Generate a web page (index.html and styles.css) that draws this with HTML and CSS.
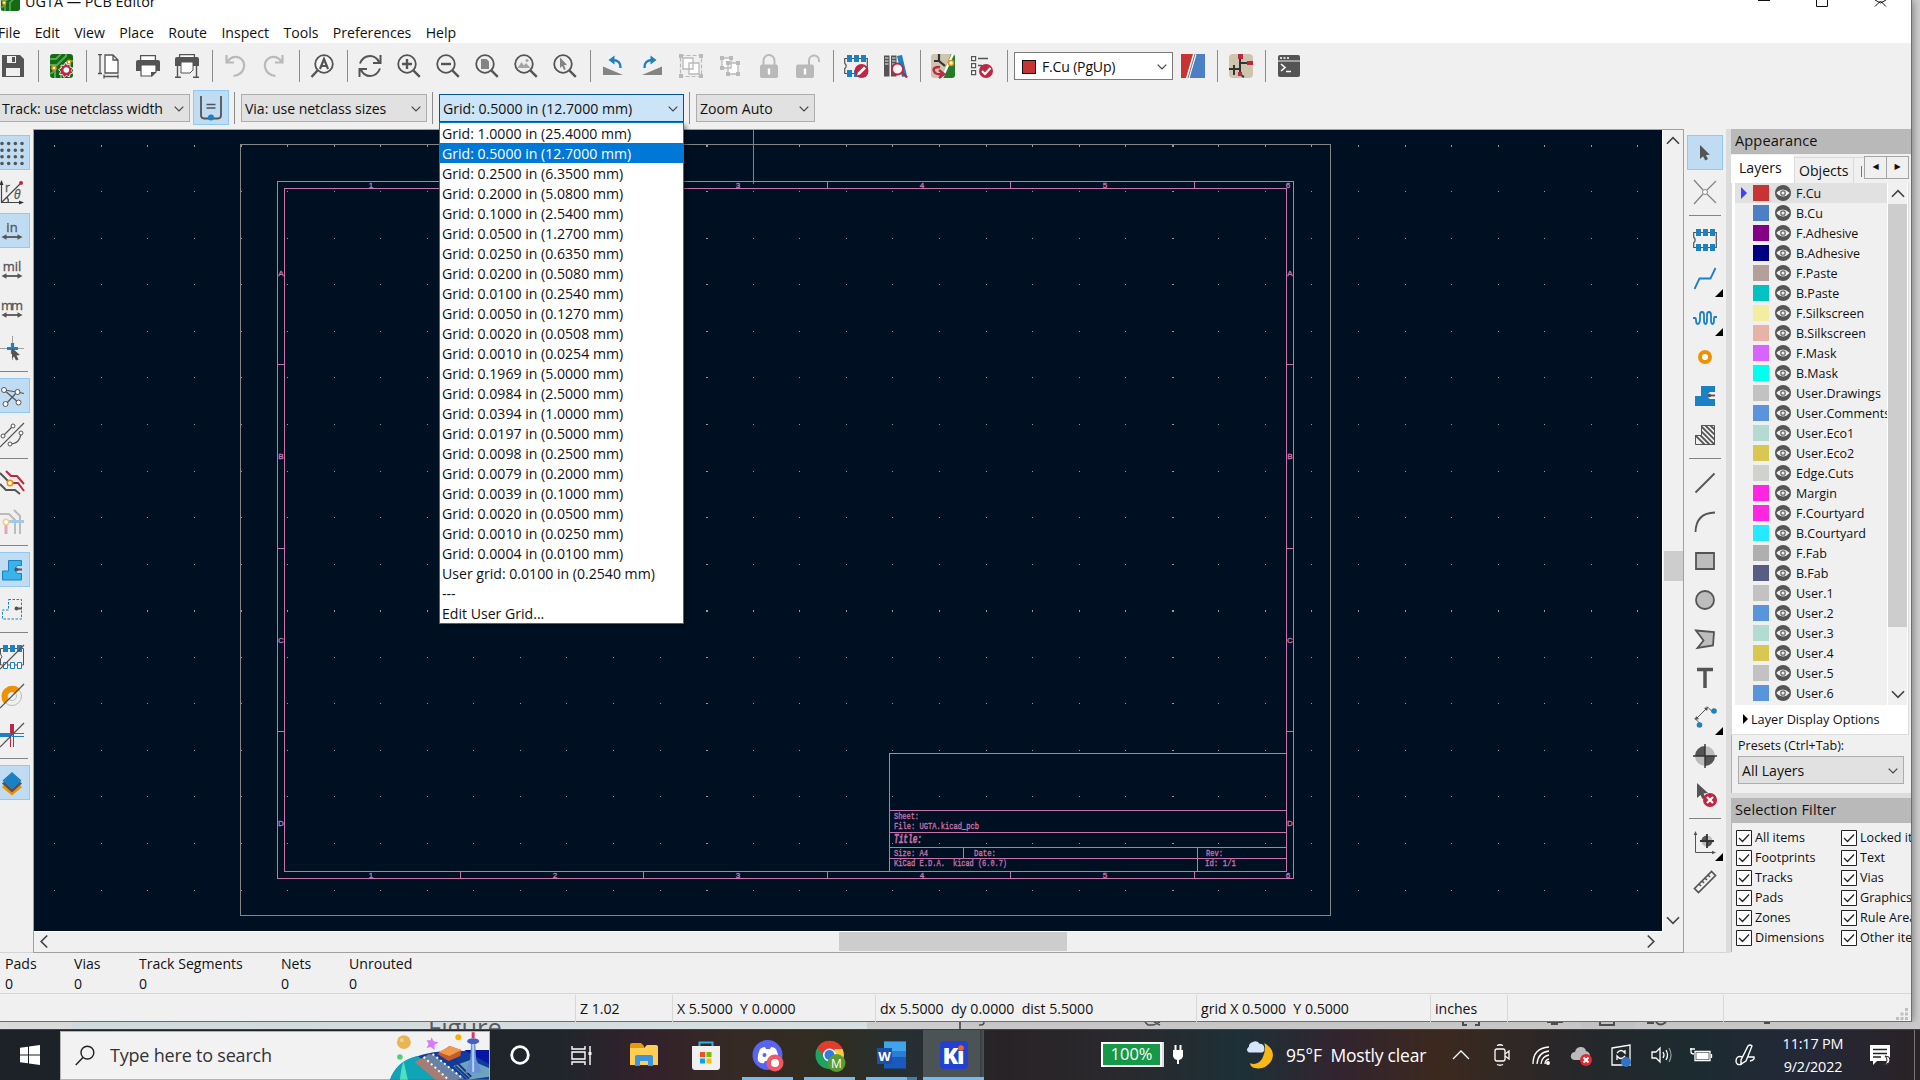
FILE: index.html
```html
<!DOCTYPE html>
<html lang="en">
<head>
<meta charset="utf-8">
<title>UGTA — PCB Editor</title>
<link rel="stylesheet" href="styles.css">
</head>
<body>
<svg class="defs" aria-hidden="true">
  <symbol id="chev" viewBox="0 0 10 6"><path d="M.7.7 5 5 9.3.7" fill="none" stroke="currentColor" stroke-width="1.2"/></symbol>
  <symbol id="lens" viewBox="0 0 24 24"><circle cx="10" cy="10" r="8.8" fill="none" stroke="#545454" stroke-width="1.8"/><path d="m16.3 16.3 6.5 6.5" stroke="#545454" stroke-width="2.4"/></symbol>
  <symbol id="eye" viewBox="0 0 16 16"><circle cx="8" cy="8" r="8" fill="#545454"/><path d="M1.3 8Q8 .8 14.7 8 8 15.2 1.3 8z" fill="#f2f2f2"/><circle cx="8" cy="8" r="2.2" fill="#f2f2f2" stroke="#686868" stroke-width="1.3"/></symbol>
  <symbol id="board" viewBox="0 0 24 24"><rect x="1" width="23" height="24" rx="3" fill="#136b13"/><path d="M1 5h6l5-5M1 11h7l9-9V0M24 7h-5l-7 7v10M1 20l5-3v7" fill="none" stroke="#5ba55b" stroke-width="2"/><circle cx="5" cy="14" r="2" fill="#fff" stroke="#f29100" stroke-width="1.5"/><circle cx="20" cy="8" r="1.8" fill="#fff" stroke="#f29100" stroke-width="1.3"/></symbol>
  <symbol id="fp" viewBox="0 0 24 24"><path d="M.7 4.5h22.6v15H.7v-4.7q3-2.8 0-5.6z" fill="none" stroke="#545454" stroke-width="1.2"/><path d="M3 1h5v7H3zm7 0h5v7h-5zm7 0h5v7h-5zM3 16h5v7H3zm7 0h5v7h-5zm7 0h5v7h-5z" fill="#1a81c4"/></symbol>
  <symbol id="units" viewBox="0 0 24 24"><path d="M4 18h16" stroke="#545454" stroke-width="1.8"/><path d="m1.500 18 5-2.800v5.600zM22.500 18l-5-2.800v5.600z" fill="#545454"/></symbol>
</svg>

<div class="window">
  <header class="titlebar">
    <svg class="app-icon" viewBox="0 0 24 24"><use href="#board"/></svg>
    <span class="title">UGTA — PCB Editor</span>
    <svg class="win-buttons" viewBox="0 0 140 12"><path d="M2 .5h12M60.500 0v6.500h11V0M119 0l5.500 3L130 0M119 6.500l5.500-5.500 5.500 5.500" fill="none" stroke="#111"/></svg>
  </header>
  <nav class="menubar"><span>File</span><span>Edit</span><span>View</span><span>Place</span><span>Route</span><span>Inspect</span><span>Tools</span><span>Preferences</span><span>Help</span></nav>

  <div class="toolbar main-tools">
    <button><svg viewBox="0 0 24 24"><path d="M1 1h18l4 4v18H1z" fill="#545454"/><path d="M6 2h9v7H6zM5 14h14v8H5z" fill="#f0f0f0"/><path d="M11 3h3v5h-3z" fill="#545454"/></svg></button>
    <i class="sep"></i>
    <button><svg viewBox="0 0 24 24"><use href="#board"/><path d="m17 8 1 3 3-1 0 3 3 1-1.500 2.500L24 19l-3 1-.5 3-3-1.500L15 23.500l-1.500-3-3 0 1-3-2-2 2.800-1.500-.3-3 3 .5z" fill="#bf2641" stroke="#fff" stroke-width=".8"/><circle cx="17.300" cy="16" r="2.800" fill="#fff"/></svg></button>
    <i class="sep"></i>
    <button><svg viewBox="0 0 24 24"><path d="M8 1h8l5 5v13H8zM16 1v5h5" fill="#fff" stroke="#545454" stroke-width="1.300"/><path d="M3 0v20M1 .6h4M1 19.500h4M7 22.500h14M7 20.500v4M21 20.500v4" fill="none" stroke="#545454" stroke-width="1.300"/></svg></button>
    <button><svg viewBox="0 0 24 24"><path d="M4.600 7V1.600h14.800V7" fill="#fff" stroke="#545454" stroke-width="1.300"/><path d="M0 8q0-2 2-2h20q2 0 2 2v9H0z" fill="#545454"/><path d="M5 11h15v7l-4 4H5z" fill="#fff" stroke="#545454" stroke-width="1.200"/><path d="m20 18-5 0v5" fill="#545454"/></svg></button>
    <button><svg viewBox="0 0 24 24"><path d="M4.600 4V.6h14.800V4" fill="#fff" stroke="#545454" stroke-width="1.300"/><path d="M0 5q0-2 2-2h20q2 0 2 2v7H0z" fill="#545454"/><path d="M6 8h12v8l-3 3H6z" fill="#fff" stroke="#545454"/><path d="M2.500 12v11M21.500 12v11M0 23.300h6M18 23.300h6" stroke="#545454" stroke-width="1.400"/></svg></button>
    <i class="sep"></i>
    <button><svg viewBox="0 0 24 24"><path d="M3.500 1v7.500H11M4 8Q9 1 16 3.500q6 3 5 9.500-1.500 8-10.500 9" fill="none" stroke="#b9b9b9" stroke-width="2.200"/></svg></button>
    <button><svg viewBox="0 0 24 24"><path d="M20.500 1v7.500H13M20 8Q15 1 8 3.500 2 6.500 3 13q1.500 8 10.500 9" fill="none" stroke="#b9b9b9" stroke-width="2.200"/></svg></button>
    <i class="sep"></i>
    <button><svg viewBox="0 0 24 24"><circle cx="14" cy="10" r="8.800" fill="#f6f6f6" stroke="#545454" stroke-width="1.800"/><path d="m7.500 16.500-6 6.500" stroke="#545454" stroke-width="2.400"/><path d="m10 15 4-10 4 10M11.500 12h5" fill="none" stroke="#545454" stroke-width="2.200"/></svg></button>
    <i class="sep"></i>
    <button><svg viewBox="0 0 24 24"><path d="M2 9.500Q5 2 12 2q6 0 9 6M22.500 1v8H15M22 14.500Q19 22 12 22q-6 0-9-6M1.500 23v-8H9" fill="none" stroke="#545454" stroke-width="2"/></svg></button>
    <button><svg viewBox="0 0 24 24"><use href="#lens"/><path d="M10 5v10M5 10h10" stroke="#545454" stroke-width="2.400"/></svg></button>
    <button><svg viewBox="0 0 24 24"><use href="#lens"/><path d="M5 10h10" stroke="#545454" stroke-width="2.400"/></svg></button>
    <button><svg viewBox="0 0 24 24"><use href="#lens"/><path d="M6 5h5.500L14 7.500V15H6z" fill="#848484"/></svg></button>
    <button><svg viewBox="0 0 24 24"><use href="#lens"/><path d="m3.500 14 4-6 2.500 3.500 2-2.500 4.500 5z" fill="#a5a5a5"/><circle cx="13" cy="6.500" r="1.500" fill="#a5a5a5"/></svg></button>
    <button><svg viewBox="0 0 24 24"><use href="#lens"/><path d="m7 3.500 7 7.300-3 .4 1.800 4-1.800.8-1.800-4L7 14z" fill="#848484"/></svg></button>
    <i class="sep"></i>
    <button><svg viewBox="0 0 24 24"><path d="M2 12.500v8.500h20z" fill="#848484"/><path d="M19.500 14Q20 6.500 12 6" fill="none" stroke="#1a81c4" stroke-width="2.400"/><path d="m7.500 6 6-4.500v9z" fill="#1a81c4"/></svg></button>
    <button><svg viewBox="0 0 24 24"><path d="M22 12.500v8.500H2z" fill="#848484"/><path d="M4.500 14Q4 6.500 12 6" fill="none" stroke="#1a81c4" stroke-width="2.400"/><path d="m16.500 6-6-4.500v9z" fill="#1a81c4"/></svg></button>
    <button><svg viewBox="0 0 24 24"><path d="M1.500 1.500h21v21h-21z" fill="none" stroke="#b9b9b9" stroke-width="1.200" stroke-dasharray="4 2"/><path d="M0 0h4v4H0zM20 0h4v4h-4zM0 20h4v4H0zM20 20h4v4h-4z" fill="#b9b9b9"/><path d="M4 4h10v11H4zM10 9h10v11H10z" fill="#fff" stroke="#b9b9b9" stroke-width="1.300"/></svg></button>
    <button><svg viewBox="0 0 24 24"><path d="M4 4h9v10H4zM10 9h10v11H10z" fill="#fff" stroke="#b9b9b9" stroke-width="1.300"/><path d="M2 2h4v4H2zM11 2h4v4h-4zM2 12h4v4H2zM18 7h4v4h-4zM18 18h4v4h-4zM8 18h4v4H8zM8 7h4v4H8z" fill="#b9b9b9"/></svg></button>
    <button><svg viewBox="0 0 24 24"><path d="M6.500 11V6.500a5.500 5.500 0 0 1 11 0V11" fill="none" stroke="#b9b9b9" stroke-width="2"/><rect x="3" y="10.500" width="18" height="13.500" rx="2" fill="#b9b9b9"/><path d="M12 14.500v6" stroke="#fff" stroke-width="2.400"/></svg></button>
    <button><svg viewBox="0 0 24 24"><path d="M13 11V6.500a5 5 0 0 1 10 0V8" fill="none" stroke="#b9b9b9" stroke-width="2"/><rect y="10.500" width="18" height="13.500" rx="2" fill="#b9b9b9"/><path d="M9 14.500v6" stroke="#fff" stroke-width="2.400"/></svg></button>
    <i class="sep"></i>
    <button><svg viewBox="0 0 24 24"><use href="#fp"/><circle cx="17.500" cy="17" r="7" fill="#bf2641"/><path d="m13 21.500 1-3 6-6 2 2-6 6z" fill="#fff"/></svg></button>
    <button><svg viewBox="0 0 24 24"><path d="M1 1.500h5.500v21H1zM8 1.500h5.500v21H8z" fill="#545454"/><path d="m14 2 5-1 5 21-5 1z" fill="#1a81c4"/><path d="M2 4h3.500M2 7h3.500M9 4h3.500M9 7h3.500M2 10h3.500M9 10h3.500" stroke="#eee" stroke-width="1"/><path d="m19 18 5 5.500" stroke="#bf2641" stroke-width="2.500"/><circle cx="14.500" cy="15" r="5.500" fill="#f5f5f5" stroke="#bf2641" stroke-width="1.800"/></svg></button>
    <i class="sep"></i>
    <button><svg viewBox="0 0 24 24"><path d="M3 0h18L10 24H3q-3 0-3-3V3q0-3 3-3z" fill="#cfc5ae"/><path d="M21 0q3 0 3 3v18q0 3-3 3H10L20 0z" fill="#277a2a"/><path d="M22 0 11 24" stroke="#fff" stroke-width="2.500"/><path d="M8 0v7H3M8 7l6 5" fill="none" stroke="#333" stroke-width="2.200"/><circle cx="20" cy="9" r="2.500" fill="#fff" stroke="#f29100" stroke-width="1.500"/><path d="M9 13Q1 13 3 17q1 4 8 3M8 16l5 4-5 4" fill="none" stroke="#bf2641" stroke-width="2.400"/></svg></button>
    <button><svg viewBox="0 0 24 24"><path d="M1.600 2.600h4v4h-4zM1.600 9.600h4v4h-4zM1.600 16.600h4v4h-4z" fill="#fff" stroke="#545454" stroke-width="1.200"/><path d="M8 4.500h10M8 11.500h4" stroke="#545454" stroke-width="1.500"/><circle cx="16" cy="17" r="7" fill="#bf2641"/><path d="m12 17 3 3 5.500-6" fill="none" stroke="#fff" stroke-width="2.200"/></svg></button>
    <i class="sep"></i>
    <div class="combo layer-combo"><i class="swatch"></i><span>F.Cu (PgUp)</span><svg class="chev"><use href="#chev"/></svg></div>
    <button><svg viewBox="0 0 24 24"><path d="M0 0h12L5 24H0z" fill="#c83434"/><path d="M15 0h9v24H8z" fill="#4d7fc4"/><path d="M14 0 7 24" stroke="#fff" stroke-width="3"/><path d="M14 0 7 24" stroke="#555" stroke-width=".8"/></svg></button>
    <i class="sep"></i>
    <button><svg viewBox="0 0 24 24"><rect width="24" height="24" rx="4" fill="#cfc5ae"/><path d="M11 3v14q0 4 4 6M11 9h10M11 15H0M5 11v10" fill="none" stroke="#333" stroke-width="2"/><path d="M9 0h5v5H9zM18 7h6v4h-6zM9 18h4v4H9z" fill="#bf2641"/></svg></button>
    <i class="sep"></i>
    <button><svg viewBox="0 0 24 24"><path d="M1 3q0-2 2-2h18q2 0 2 2v18q0 2-2 2H3q-2 0-2-2z" fill="#545454"/><path d="M1 7h22" stroke="#eee"/><path d="M3 4h2M6.500 4h2M10 4h2M4 10l4 3.500L4 17M9 17.500h5" fill="none" stroke="#fff" stroke-width="1.600"/></svg></button>
  </div>

  <div class="toolbar option-tools">
    <div class="combo track">Track: use netclass width<svg class="chev"><use href="#chev"/></svg></div>
    <button class="on track-toggle"><svg viewBox="0 0 24 24"><path d="M2 0v19q0 3.500 3 3.500h14q3 0 3-3.500V0" fill="none" stroke="#545454" stroke-width="1.800"/><path d="M7.500 8.500h9M7.500 12h9" stroke="#545454" stroke-width="1.400"/><circle cx="12" cy="21.500" r="3" fill="#1a81c4"/></svg></button>
    <i class="sep"></i>
    <div class="combo via">Via: use netclass sizes<svg class="chev"><use href="#chev"/></svg></div>
    <i class="sep"></i>
    <div class="grid-picker">
      <div class="combo grid">Grid: 0.5000 in (12.7000 mm)<svg class="chev"><use href="#chev"/></svg></div>
      <ul class="dropdown" id="grid-options"></ul>
    </div>
    <i class="sep"></i>
    <div class="combo zoom">Zoom Auto<svg class="chev"><use href="#chev"/></svg></div>
  </div>

  <main class="workspace">
    <aside class="side-tools left-tools">
      <button class="on"><svg viewBox="0 0 24 24"><path d="M2 2.500h22M2 9.200h22M2 15.800h22M2 22.500h22" stroke="#545454" stroke-width="3.600" stroke-linecap="round" stroke-dasharray="0 6.670"/></svg></button>
      <button><svg viewBox="0 0 24 24"><path d="M1.500 22.500 20 4M1.500 1v21.500H22M7 17.500q2 2 1 5" fill="none" stroke="#444" stroke-width="1.200"/><path d="m1.500 0 2 5h-4zM24 22.500l-5 2v-4z" fill="#333"/><circle cx="21" cy="3" r="2" fill="#bf2641"/><text x="5" y="12" class="ico-text" font-size="12">r</text><text x="14" y="19" class="ico-text" font-size="12" font-style="italic">θ</text></svg></button>
      <button class="on"><svg viewBox="0 0 24 24"><text x="12" y="13" text-anchor="middle" class="ico-text" font-size="13">in</text><use href="#units"/></svg></button>
      <button><svg viewBox="0 0 24 24"><text x="12" y="13" text-anchor="middle" class="ico-text" font-size="13">mil</text><use href="#units"/></svg></button>
      <button><svg viewBox="0 0 24 24"><text x="12" y="13" text-anchor="middle" class="ico-text" font-size="13" textLength="22">mm</text><use href="#units"/></svg></button>
      <button><svg viewBox="0 0 24 24"><path d="M12.500 0v24M0 12.500h24" stroke="#a0a0a0"/><path d="M12.500 7v11M7 12.500h11" stroke="#1a81c4" stroke-width="3.200"/><path d="m12 12 8 7-3.500.5 2 4-2.500 1-2-4-2 2z" fill="#545454"/></svg></button>
      <i class="sep"></i>
      <button class="on"><svg viewBox="0 0 24 24"><path d="m4 6 15 13M6 20 17 8l7 1.500M4 6l13 2" stroke="#545454" stroke-width="1.200" fill="none"/><g fill="#fff" stroke="#545454"><circle cx="4" cy="6" r="2.500"/><circle cx="17.500" cy="8" r="2.500"/><circle cx="18.500" cy="18.500" r="2.500"/><circle cx="5.500" cy="20" r="2.500"/></g></svg></button>
      <button><svg viewBox="0 0 24 24"><path d="M0 24 24 0M3 13 13 3M10 21q10 0 11-11" stroke="#545454" stroke-width="1.200" fill="none"/><g fill="#fff" stroke="#545454"><circle cx="3" cy="13" r="2"/><circle cx="13" cy="3" r="2"/><circle cx="21" cy="10" r="2"/><circle cx="10" cy="21" r="2"/></g></svg></button>
      <i class="sep"></i>
      <button><svg viewBox="0 0 24 24"><path d="m0 2 10 10M0 13l6 6h9l5 4" fill="none" stroke="#545454" stroke-width="2"/><path d="m6 0 5 5h6l7 8M11 12h7l6 8" fill="none" stroke="#bf2641" stroke-width="2"/><circle cx="10" cy="12" r="2.700" fill="#fff" stroke="#f29100" stroke-width="1.600"/></svg></button>
      <button><svg viewBox="0 0 24 24"><path d="M0 4h9l6 6v14M14 0l6 6v18" fill="none" stroke="#bbb" stroke-width="2"/><path d="M6 12v12" stroke="#e5a6b2" stroke-width="3"/><path d="M6 11.500h18" stroke="#9fcbe8" stroke-width="3"/><circle cx="6" cy="12" r="2.700" fill="#fff" stroke="#f8ca87" stroke-width="1.600"/></svg></button>
      <i class="sep"></i>
      <button class="on"><svg viewBox="0 0 24 24"><path d="M8.500 2.500h13v5h-4a4.500 4.500 0 0 0 0 8h4v6.500h-19v-9h6z" fill="#39b4ea" stroke="#1a81c4"/><path d="M17 11.500h5" stroke="#545454" stroke-width="2"/><circle cx="16.500" cy="11.500" r="2" fill="#545454"/></svg></button>
      <button><svg viewBox="0 0 24 24"><path d="M8.500 2.500h13v19.500h-19v-9h6z" fill="none" stroke="#1a81c4" stroke-dasharray="2.500 1.500"/><path d="M17 11.500h5" stroke="#545454" stroke-width="2"/><circle cx="16.500" cy="11.500" r="2" fill="#545454"/></svg></button>
      <i class="sep"></i>
      <button><svg viewBox="0 0 24 24"><path d="M.5 3.500h23V20H.5v-6q3-2 0-5z" fill="none" stroke="#545454"/><path d="M3 0h5v7H3zm7 0h5v7h-5zm7 0h5v7h-5z" fill="#1a81c4"/><path d="M3.500 17.500h4v6h-4zm7 0h4v6h-4zm7 0h4v6h-4z" fill="#fff" stroke="#1a81c4"/><path d="M0 24 24 0" stroke="#545454" stroke-width="1.200"/></svg></button>
      <button><svg viewBox="0 0 24 24"><circle cx="12" cy="12" r="9.500" fill="none" stroke="#bbb"/><circle cx="12" cy="12" r="4.500" fill="none" stroke="#bbb"/><path d="M4.500 20A10 10 0 0 1 20 5l-4.500 4.500a4.500 4.500 0 0 0-7 6z" fill="#f29100"/><path d="M0 24 24 0" stroke="#545454" stroke-width="1.200"/></svg></button>
      <button><svg viewBox="0 0 24 24"><path d="M12 1v11" stroke="#bf2641" stroke-width="4"/><path d="M10.500 12v12M13.500 12v12" stroke="#bf2641"/><path d="M0 12h11" stroke="#1a81c4" stroke-width="4"/><path d="M12 10.500h12M12 13.500h12" stroke="#1a81c4"/><path d="M0 24 24 0" stroke="#545454" stroke-width="1.200"/></svg></button>
      <i class="sep"></i>
      <button class="on"><svg viewBox="0 0 24 24"><path d="m3 15 9 7.500 9-7.500" fill="none" stroke="#f29100" stroke-width="3"/><path d="m3 11.500 9 8 9-8" fill="none" stroke="#545454" stroke-width="3"/><path d="m12 1 9.500 8.500L12 18 2.500 9.500z" fill="#1a81c4"/></svg></button>
    </aside>

    <section class="canvas-frame">
      <svg class="canvas" viewBox="34 130 1628 801" shape-rendering="crispEdges">
        <g id="grid-dots" fill="#999"></g>
        <path d="M753.500 130v54" stroke="#848484"/>
        <path d="M240.500 144.500h1090v771h-1090z" fill="none" stroke="#848484"/>
        <g fill="none" stroke="#c872ac">
          <path d="M277.500 181.500h1016v697h-1016zM284.500 188.500h1002v683h-1002z"/>
          <path d="M277 364.500h7M277 548.500h7M277 731.500h7M1286 364.500h7M1286 548.500h7M1286 731.500h7"/>
          <path d="M460.500 181v7M643.500 181v7M827.500 181v7M1010.500 181v7M1194.500 181v7M460.500 871v7M643.500 871v7M827.500 871v7M1010.500 871v7M1194.500 871v7"/>
          <path d="M889.500 871V753.500h397M889 810.500h397M889 832.500h397M889 847.500h397M889 858.500h397M963.500 847v11M1197.500 847v24"/>
        </g>
        <g class="sheet-marks">
          <text x="281" y="276">A</text><text x="281" y="459">B</text><text x="281" y="643">C</text><text x="281" y="826">D</text>
          <text x="1290" y="276">A</text><text x="1290" y="459">B</text><text x="1290" y="643">C</text><text x="1290" y="826">D</text>
          <text x="371" y="188">1</text><text x="555" y="188">2</text><text x="738" y="188">3</text><text x="922" y="188">4</text><text x="1105" y="188">5</text><text x="1288" y="188">6</text>
          <text x="371" y="878">1</text><text x="555" y="878">2</text><text x="738" y="878">3</text><text x="922" y="878">4</text><text x="1105" y="878">5</text><text x="1288" y="878">6</text>
        </g>
        <g class="sheet-text">
          <text x="894" y="819" textLength="25" lengthAdjust="spacingAndGlyphs">Sheet:</text>
          <text x="894" y="829" textLength="85" lengthAdjust="spacingAndGlyphs">File: UGTA.kicad_pcb</text>
          <text x="894" y="843" textLength="28" lengthAdjust="spacingAndGlyphs" class="sheet-title">Title:</text>
          <text x="894" y="856" textLength="34" lengthAdjust="spacingAndGlyphs">Size: A4</text>
          <text x="974" y="856" textLength="22" lengthAdjust="spacingAndGlyphs">Date:</text>
          <text x="1206" y="856" textLength="17" lengthAdjust="spacingAndGlyphs">Rev:</text>
          <text x="894" y="866" textLength="51" lengthAdjust="spacingAndGlyphs">KiCad E.D.A.</text>
          <text x="953" y="866" textLength="54" lengthAdjust="spacingAndGlyphs">kicad (6.0.7)</text>
          <text x="1205" y="866" textLength="31" lengthAdjust="spacingAndGlyphs">Id: 1/1</text>
        </g>
      </svg>
      <div class="vscroll"><svg class="arrow up"><use href="#chev"/></svg><i class="thumb"></i><svg class="arrow down"><use href="#chev"/></svg></div>
      <div class="hscroll"><svg class="arrow prev"><use href="#chev"/></svg><i class="thumb"></i><svg class="arrow next"><use href="#chev"/></svg></div>
    </section>

    <aside class="side-tools right-tools">
      <button class="on"><svg viewBox="0 0 24 24"><path d="M7 4v14l3-2.700 2.300 4.200 2.700-1.400-2.200-4 4-.4z" fill="#545454"/></svg></button>
      <button><svg viewBox="0 0 24 24"><path d="m1 0 9 10M23 1l-9 9M1 24l9-10M23 23l-9-9" stroke="#848484" stroke-width="1.300"/><circle cx="12" cy="12" r="2.500" fill="#fff" stroke="#848484"/></svg></button>
      <i class="sep"></i>
      <button><svg viewBox="0 0 24 24"><use href="#fp"/></svg></button>
      <button class="more"><svg viewBox="0 0 24 24"><path d="m1.500 22 5-10.500h11l5-10.500" fill="none" stroke="#1a81c4" stroke-width="1.800"/></svg></button>
      <button class="more"><svg viewBox="0 0 24 24"><path d="M0 12h2q1 0 1 2 0 4 1.800 4T7 14V9q0-3 2-3t2 3v5q0 4 1.500 4T14 14V9q0-3 2-3t2 3v5q0 4 1.500 4t1.500-4 1-3h2" fill="none" stroke="#1a81c4" stroke-width="1.800"/></svg></button>
      <button><svg viewBox="0 0 24 24"><circle cx="12" cy="12" r="5" fill="#fff" stroke="#f29100" stroke-width="4"/></svg></button>
      <button><svg viewBox="0 0 24 24"><path d="M8 2h14v6h-5a4 4 0 0 0 0 7h5v7H2V12h6z" fill="#1a81c4"/><path d="M16 11.500h6" stroke="#545454" stroke-width="1.800"/><circle cx="16.500" cy="11.500" r="1.800" fill="#545454"/></svg></button>
      <button><svg viewBox="0 0 24 24"><clipPath id="zone"><path d="M8 2h14v20H2V12h6z"/></clipPath><g clip-path="url(#zone)" stroke="#545454" stroke-width="1.800"><path d="m-8 2 20 20M-3 2l20 20M2 2l20 20M7 2l20 20M12 2l20 20M17 2l20 20" /></g><path d="M8.500 2.500h13v19h-19v-9h6z" fill="none" stroke="#545454"/></svg></button>
      <i class="sep"></i>
      <button><svg viewBox="0 0 24 24"><path d="M2.500 21.500 21.500 2.500" stroke="#545454" stroke-width="1.800"/></svg></button>
      <button><svg viewBox="0 0 24 24"><path d="M2.500 22Q3 3 22 2.500" fill="none" stroke="#545454" stroke-width="1.800"/></svg></button>
      <button><svg viewBox="0 0 24 24"><path d="M3 4h18v16H3z" fill="#bdbdbd" stroke="#545454" stroke-width="1.800"/></svg></button>
      <button><svg viewBox="0 0 24 24"><circle cx="12" cy="12" r="9" fill="#bdbdbd" stroke="#545454" stroke-width="1.800"/></svg></button>
      <button><svg viewBox="0 0 24 24"><path d="M3 3.500 21 5l-1 13.500L4.500 21l6-7.500z" fill="#bdbdbd" stroke="#545454" stroke-width="1.800"/></svg></button>
      <button><svg viewBox="0 0 24 24"><path d="M4 3.500h16M12 3v19" stroke="#545454" stroke-width="3.500"/></svg></button>
      <button class="more"><svg viewBox="0 0 24 24"><path d="m4 13 9-9M1.500 13 7 18.500M14 1.500l5.500 5.500" stroke="#545454" fill="none"/><path d="m2 15 1-4 3 3zM15 2l-4 1 3 3z" fill="#545454"/><circle cx="6.500" cy="20" r="2.800" fill="#1a81c4"/><circle cx="21" cy="6" r="2.800" fill="#1a81c4"/></svg></button>
      <button><svg viewBox="0 0 24 24"><circle cx="12" cy="12" r="10" fill="#bbb"/><path d="M12 2v10H2A10 10 0 0 1 12 2zM12 22V12h10a10 10 0 0 1-10 10z" fill="#545454"/><path d="M12 0v24M0 12h24" stroke="#333" stroke-width="1.400"/></svg></button>
      <button><svg viewBox="0 0 24 24"><path d="M4 0v15l3.500-3 2 4 3-1.500-2-4 4.500-.5z" fill="#545454"/><circle cx="17" cy="17" r="7" fill="#bf2641"/><path d="m14 14 6 6M20 14l-6 6" stroke="#fff" stroke-width="2.200"/></svg></button>
      <i class="sep"></i>
      <button class="more"><svg viewBox="0 0 24 24"><path d="M2.500 2v19.500H21" fill="none" stroke="#545454"/><path d="m2.500 0 1.800 4H.7zM23 21.500l-4 1.800v-3.600z" fill="#545454"/><circle cx="14" cy="10" r="5.500" fill="#bbb"/><path d="M14 4.500V10H8.500A5.500 5.500 0 0 1 14 4.500zM14 15.500V10h5.500a5.500 5.500 0 0 1-5.500 5.500z" fill="#545454"/><path d="M14 3v14M7 10h14" stroke="#333" stroke-width="1.800"/></svg></button>
      <button><svg viewBox="0 0 24 24"><path d="M1.500 18.500 18.500 1.500l4 4-17 17zM6 14l2 2M9 11l2 2M12 8l2 2M15 5l2 2" fill="none" stroke="#545454" stroke-width="1.700"/></svg></button>
    </aside>

    <aside class="panel">
      <h2>Appearance</h2>
      <div class="tabs"><span class="tab active">Layers</span><span class="tab">Objects</span><i class="tab-cut"></i><b class="tab-arrow">◀</b><b class="tab-arrow">▶</b></div>
      <div class="notebook">
        <div class="layer-area">
          <ul class="layers" id="layers"></ul>
          <div class="layer-scroll"><svg class="arrow up"><use href="#chev"/></svg><i class="thumb"></i><svg class="arrow down"><use href="#chev"/></svg></div>
        </div>
        <div class="display-options"><i class="tri"></i>Layer Display Options</div>
      </div>
      <div class="presets"><label>Presets (Ctrl+Tab):</label><div class="combo">All Layers<svg class="chev"><use href="#chev"/></svg></div></div>
      <h2 class="filter-head">Selection Filter</h2>
      <div class="filters" id="filters"></div>
    </aside>
  </main>

  <div class="stats">
    <div><span>Pads</span><span>0</span></div><div><span>Vias</span><span>0</span></div><div><span>Track Segments</span><span>0</span></div><div><span>Nets</span><span>0</span></div><div><span>Unrouted</span><span>0</span></div>
  </div>
  <footer class="statusbar">
    <span></span><span>Z 1.02</span><span>X 5.5000&nbsp; Y 0.0000</span><span>dx 5.5000&nbsp; dy 0.0000&nbsp; dist 5.5000</span><span>grid X 0.5000&nbsp; Y 0.5000</span><span>inches</span><span></span>
    <span><svg class="grip" viewBox="0 0 12 12"><path d="M9 0h3v3H9zM9 4.500h3v3H9zM9 9h3v3H9zM4.500 4.500h3v3h-3zM4.500 9h3v3h-3zM0 9h3v3H0z" fill="#bfbfbf"/></svg></span>
  </footer>
</div>

<div class="behind"><span class="doc-text">Figure</span><svg class="bits" viewBox="0 0 940 8"><path d="M6 0q0 3-3 3H1M167 0l3 3h5M175 3l7-3M182 3l-6-3" fill="none" stroke="#444" stroke-width="1.500"/><path d="M603 0h54v8h-54z" fill="#c4c4c4"/><path d="M485 0v3h4M501 0v3h-4M569 0h16M573 2h7M622 0v3h14V0M669 1h7M678 0q4 5 10 0M786 1h6" fill="none" stroke="#444" stroke-width="2"/></svg></div>

<div class="taskbar">
  <div class="start"><svg viewBox="0 0 20 20"><path d="m0 2.800 8-1.100v7.800H0zM9 1.500 20 0v9.500H9zM0 10.500h8v7.800l-8-1.100zM9 10.500h11V20L9 18.500z" fill="#fff"/></svg></div>
  <div class="search">
    <svg class="mag" viewBox="0 0 22 22"><circle cx="13" cy="8" r="6.700" fill="none" stroke="#222" stroke-width="1.500"/><path d="m8.300 13-7.500 8" stroke="#222" stroke-width="1.500"/></svg>
    <span>Type here to search</span>
    <svg class="art" viewBox="0 0 100 48">
      <path d="M0 48Q6 31 25 25 48 17 75 19h25v29z" fill="#123c9c"/><path d="M0 48q7-20 28-24l30 24z" fill="#10a5b6"/><path d="M10 48q2-17 4-18l4 18z" fill="#4ee0bf"/><path d="M25 30 40 22l29 26H46z" fill="#a77c76"/><path d="m33 25 10-3 32 25-14 1z" fill="#6882a6"/><path d="m34 25 25 23M43 22l31 25" stroke="#e9fff0" stroke-width="2" stroke-dasharray="2 3"/>
      <path d="m48 22 12-8 12 4-1 6-12 5z" fill="#c65b2c"/><path d="m49 20 12-6 11 4-12 6z" fill="#f2994c"/><path d="M75 18h25v14z" fill="#0714a5"/><path d="m64 34 17-6 19 8v9l-21 3z" fill="#6aa4bd"/><path d="m65 28 17 17M66 34l14 13" stroke="#1d367d" stroke-width="2"/><path d="M82 8h4l1 19 6 14H76l5-14z" fill="#6a8fd4"/><path d="M84 10v30" stroke="#b0d4f5" stroke-width="2"/><ellipse cx="84" cy="9" rx="6" ry="3" fill="#465fc0"/><path d="M84 0v6" stroke="#d73667" stroke-width="3"/>
      <ellipse cx="14" cy="10" rx="7" ry="7" fill="#e8b455"/><circle cx="12" cy="8" r="2" fill="#f5d08c"/><path d="m42 5 2 4 5 1-4 3 0 5-4-3-4 1 2-4-2-4 4 0z" fill="#d97bf0"/><circle cx="69" cy="5" r="3" fill="#ffae00"/><circle cx="10" cy="25" r="2.800" fill="#4bd17a"/>
    </svg>
  </div>
  <div class="apps">
    <span class="app"><svg viewBox="0 0 36 36"><circle cx="18" cy="18" r="8.300" fill="none" stroke="#fff" stroke-width="2.800"/></svg></span>
    <span class="app"><svg viewBox="0 0 36 36"><path d="M8 9v3h13V9M8 28v-3h13v3M8 15h13v7H8zM26 9v19" fill="none" stroke="#fff" stroke-width="1.400"/><path d="M24.500 15h3v3h-3z" fill="#fff"/></svg></span>
    <span class="app"><svg viewBox="0 0 36 36"><path d="M4 8q0-2 2-2h9l3 3v4H4z" fill="#e39b0c"/><path d="M4 11h14l3-3h9q2 0 2 2v18H4z" fill="#ffcf53"/><path d="M9 29v-9q0-2 2-2h14q2 0 2 2v9h-5v-5h-8v5z" fill="#3b95e0"/></svg></span>
    <span class="app"><svg viewBox="0 0 36 36"><path d="M11.500 10V5.500h13V10" fill="none" stroke="#27b4e8" stroke-width="2"/><path d="M4 9h28v21q0 3-3 3H7q-3 0-3-3z" fill="#f0f0f0"/><path d="M12 15h5v5h-5z" fill="#f25022"/><path d="M18.500 15h5v5h-5z" fill="#7fba00"/><path d="M12 21.500h5v5h-5z" fill="#00a4ef"/><path d="M18.500 21.500h5v5h-5z" fill="#ffb900"/></svg></span>
    <span class="app open"><svg viewBox="0 0 36 36"><circle cx="17.500" cy="18" r="15" fill="#5865f2"/><path d="M10 12q3-2 5-2l1 2h4l1-2q3 0 5 2 3 6 2 12-3 3-6 2l-1-2h-6l-1 2q-3 1-6-2-1-6 2-12z" fill="#fff"/><circle cx="14.500" cy="18" r="2" fill="#5865f2"/><circle cx="25" cy="26" r="8.500" fill="#ee5a64"/><circle cx="25" cy="26" r="4" fill="#fff"/></svg></span>
    <span class="app open"><svg viewBox="0 0 36 36"><circle cx="17.500" cy="18" r="14" fill="#1da462"/><path d="M5.400 11A14 14 0 0 1 30.500 12H17l-6 6z" fill="#e33b2e"/><path d="M30.500 12a14 14 0 0 1-13 20l6-10-1-10z" fill="#ffcd40"/><circle cx="17.500" cy="18" r="6.500" fill="#fff"/><circle cx="17.500" cy="18" r="5" fill="#3478e5"/><circle cx="24.500" cy="26" r="9" fill="#5c9a36"/><text x="24.500" y="30.500" text-anchor="middle" class="badge-text">M</text></svg></span>
    <span class="app open split"><svg viewBox="0 0 36 36"><path d="M10 4.500h22v27H10z" fill="#185abd"/><path d="M10 4.500h22V14H10z" fill="#41a5ee"/><path d="M10 14h22v6H10z" fill="#2b7cd3"/><path d="M3 11h15v16H3z" fill="#1e4fa8"/><text x="10.500" y="24" text-anchor="middle" class="word-text">W</text></svg></span>
    <span class="app open current"><svg viewBox="0 0 36 36"><rect x="4" y="4" width="28" height="28" rx="4" fill="#2340d0"/><text x="17.500" y="27" text-anchor="middle" class="ki-text" textLength="22">Kı</text><circle cx="25" cy="11" r="2.800" fill="#f5641e"/></svg></span>
  </div>
  <div class="tray">
    <div class="battery">100%</div>
    <svg class="plug" viewBox="0 0 12 20"><path d="M3.500 0v5M8.500 0v5M6 13v6" stroke="#fff" stroke-width="2"/><path d="M1 5h10v6q-1 4-5 4t-5-4z" fill="#fff"/></svg>
    <svg class="moon" viewBox="0 0 30 30"><path d="M19 3q13 8 7 19-6 9-17 7-4-1-5-5 8 3 13-5 4-8 2-16z" fill="#f8b916"/><path d="M3 13q-4-3 0-6 0-4 4-5 5-2 7 2 5 0 5 5 0 4-4 4z" fill="#d5e5fb"/></svg>
    <span class="weather">95°F&nbsp; Mostly clear</span>
    <div class="tray-icons">
      <svg viewBox="0 0 24 24"><path d="m4 16 8-8 8 8"/></svg>
      <svg viewBox="0 0 24 24"><rect x="6" y="6" width="10" height="12" rx="2"/><path d="m16 11 4-3v8l-4-3M8 2.500q3-1.500 6 0M8 21.500q3 1.500 6 0"/></svg>
      <svg viewBox="0 0 24 24"><path d="M4 21Q4 5 20 4M8 21Q9 9 20 8M12 21q1-8 8-9M16 21q0-4 4-5"/><circle cx="19" cy="20" r="1.300" fill="#fff"/></svg>
      <svg viewBox="0 0 24 24"><path d="M5 17q-4-1-3-5 1-3 4-3 1-5 6-5 4 0 5 4 4 1 4 5-1 4-4 4z" fill="#bbb" stroke="none"/><circle cx="17" cy="17" r="6" fill="#e02b35" stroke="none"/><path d="m14.500 14.500 5 5M19.500 14.500l-5 5" stroke-width="2"/></svg>
      <svg viewBox="0 0 24 24"><path d="m3 5 18-3v20H3zM8 10q4-5 8 0v-3M16 13q-4 5-8 0v4"/><circle cx="17" cy="19" r="5" fill="#2f74c6" stroke="none"/></svg>
      <svg viewBox="0 0 24 24"><path d="M3 9h4l4-4v14l-4-4H3zM14 9q2 3 0 6M17 7q3 5 0 10"/><path d="M20 5q4 7 0 14" opacity=".5"/></svg>
      <svg viewBox="0 0 24 24"><path d="M6 8.500h15v9H6zM2 5v4q0 2 3 2M1 6h5"/><path d="M8 10.500h11v5H8z" fill="#fff"/><path d="M22.500 11v4"/></svg>
    </div>
    <svg class="pen" viewBox="0 0 24 24"><path d="m8 17 7-14q2-2 4 0l-6 15-5 3zM10 14q-7-2-7 4 0 5 6 3M15 14h6q1 3-4 4" fill="none" stroke="#fff" stroke-width="1.400"/></svg>
    <div class="clock"><span>11:17 PM</span><span>9/2/2022</span></div>
    <svg class="notify" viewBox="0 0 22 22"><path d="M1 1h20v16H8l-4 4v-4H1z" fill="#fff"/><path d="M4 5.500h14M4 9.500h14M4 13h8" stroke="#222" stroke-width="1.500"/><path d="M16 12q4 4 0 8-2 0-3-1 3 3 7 0 2-3 0-6z" fill="#fff" stroke="#222"/></svg>
    <i class="peek"></i>
  </div>
</div>
<script src="script.js"></script>
</body>
</html>
```
FILE: styles.css
```css
* { box-sizing: border-box; }
body { margin: 0; width: 1920px; height: 1080px; overflow: hidden; position: relative; background: #cfcfcf; font: 14.1px/20px "Open Sans", "Noto Sans", sans-serif; color: #111; display: flex; flex-direction: column; }
ul, h2 { margin: 0; padding: 0; list-style: none; font-weight: 400; }
svg { display: block; flex: none; }
.defs { position: absolute; width: 0; height: 0; }
button { border: 0; padding: 0; background: none; display: flex; align-items: center; justify-content: center; flex: none; }
button svg { width: 24px; height: 24px; overflow: visible; }
.ico-text { font-family: "Open Sans", sans-serif; fill: #545454; stroke: #545454; stroke-width: .3; }

.window { width: 1912px; height: 1022px; flex: none; background: #f0f0f0; border-right: 1px solid #6e6e6e; border-bottom: 1px solid #6e6e6e; box-shadow: 0 0 9px rgba(0,0,0,.5); display: flex; flex-direction: column; position: relative; z-index: 1; }
.titlebar { height: 20px; background: #fff; display: flex; align-items: flex-start; overflow: hidden; }
.app-icon { width: 20px; height: 20px; margin-top: -9px; }
.title { margin: -8px 0 0 5px; font-size: 14.4px; }
.win-buttons { width: 140px; height: 12px; margin-left: auto; margin-right: 15px; }
.menubar { height: 23px; background: #fff; display: flex; gap: 14.4px; line-height: 26px; }
.menubar span:first-child { margin-left: -2px; }

.toolbar { display: flex; align-items: center; }
.main-tools { height: 46px; }
.main-tools button { width: 39px; height: 39px; }
.main-tools button:first-child { margin-left: -6.5px; }
.toolbar .sep { width: 9px; height: 32px; flex: none; background: linear-gradient(#8b8b8b, #8b8b8b) 5px 0 / 1px 100% no-repeat; }
.option-tools { height: 40px; align-items: flex-start; padding-top: 5px; }
.combo { height: 28px; border: 1px solid #adadad; background: #e1e1e1; display: flex; align-items: center; padding: 1px 0 0 3px; white-space: nowrap; flex: none; color: #111; }
.chev { width: 10px; height: 6px; margin-left: auto; margin-right: 5px; color: #444; }
.layer-combo { width: 159px; height: 28px; margin-left: 3.5px; background: #fff; border-color: #7a7a7a; padding-left: 7px; }
.layer-combo span { letter-spacing: -.2px; }
.layer-combo .swatch { width: 14px; height: 14px; background: #c83434; border: 1px solid #111; margin-right: 6px; }
.track { width: 191px; margin-left: -1px; padding-left: 2px; letter-spacing: -.1px; }
.track-toggle { width: 36px; height: 35px; margin: -4px 0 0 3px; }
.on { background: #c0dcf3; border: 1px solid #90c8f6; }
.option-tools .sep { margin-top: -2px; }
.via { width: 186px; margin-left: 3px; letter-spacing: -.05px; }
.grid-picker { width: 245px; margin-left: 3px; position: relative; }
.grid { background: #cce4f7; border-color: #005499; }
.dropdown { position: absolute; z-index: 5; top: 28px; left: 0; width: 245px; background: #fff; border: 1px solid #0078d7; box-shadow: 3px 3px 4px rgba(0,0,0,.35); }
.dropdown li { height: 20px; line-height: 22px; padding-left: 2px; white-space: nowrap; }
.dropdown .selected { background: #0078d7; color: #fff; }
.zoom { width: 119px; margin-left: 3px; }

.workspace { height: 824px; display: flex; flex: none; }
.side-tools { display: flex; flex-direction: column; padding-top: 6px; border-bottom: 1px solid #d4d4d4; flex: none; }
.side-tools button { width: 36px; height: 35px; margin-bottom: 4px; flex: none; position: relative; }
.side-tools .sep { height: 1px; width: 32px; margin: 2px 0 6px; background: #848484; flex: none; }
.left-tools { width: 33px; overflow: hidden; }
.left-tools button { margin-left: -6px; }
.left-tools .sep { width: 28px; }
.right-tools { width: 42px; padding-left: 3px; }
.right-tools .sep { margin-left: 2px; }
.more::after { content: ""; position: absolute; right: 0; bottom: -1px; border-left: 8px solid transparent; border-bottom: 8px solid #000; }

.canvas-frame { width: 1651px; height: 824px; flex: none; border: 1px solid #a0a0a0; background: #f0f0f0; display: grid; grid-template-columns: 1628px 21px; grid-template-rows: 801px 21px; }
.canvas { width: 1628px; height: 801px; background: #001023; }
.sheet-marks { font: 8px "Liberation Sans", sans-serif; fill: #c872ac; stroke: #c872ac; stroke-width: .35; text-anchor: middle; }
.sheet-text { font: 9.5px "Liberation Mono", monospace; fill: #c872ac; stroke: #c872ac; stroke-width: .35; }
.sheet-title { font-size: 12px; font-weight: 700; font-style: italic; }
.arrow { width: 14px; height: 9px; color: #444; }
.up { transform: rotate(180deg); }
.vscroll { display: flex; flex-direction: column; align-items: center; padding: 6px 0; border-left: 1px solid #fff; }
.vscroll .thumb { width: 19px; height: 30px; background: #cdcdcd; margin-top: 406px; }
.vscroll .down { margin-top: auto; }
.hscroll { display: flex; align-items: center; padding: 0 4px 1px 3px; border-top: 1px solid #fff; }
.hscroll .thumb { width: 228px; height: 19px; background: #cdcdcd; margin-left: 788px; }
.prev { transform: rotate(90deg); }
.next { transform: rotate(-90deg); margin-left: auto; }

.panel { width: 185px; border-left: 5px solid #dcdcdc; overflow: hidden; flex: none; }
.panel h2 { height: 25px; background: #b9b9b9; padding-left: 4px; font-size: 14.6px; line-height: 23px; letter-spacing: .1px; }
.tabs { height: 29px; display: flex; align-items: flex-end; }
.tab { height: 26px; width: 60px; border: 1px solid #d9d9d9; border-bottom: 0; line-height: 25px; padding-left: 4px; }
.tab.active { width: 63px; height: 28px; background: #fff; border-color: #fff; line-height: 24px; padding-left: 7px; }
.tab-cut { width: 10px; height: 26px; border-top: 1px solid #d9d9d9; background: linear-gradient(#b8690a, #b8690a) 7px 8px / 1px 11px no-repeat; }
.tab-arrow { width: 23px; height: 23px; align-self: flex-start; margin-top: 2px; border: 1px solid #a5a5a5; text-align: center; font: 8px/20px "DejaVu Sans", sans-serif; flex: none; }
.tab-arrow + .tab-arrow { margin-left: -1px; }
.notebook { height: 552px; width: 178px; background: #fff; border: 1px solid #dcdcdc; border-top: 0; }
.layer-area { display: flex; padding-left: 3px; height: 522px; }
.layers { width: 152px; height: 522px; background: #f0f0f0; overflow: hidden; font-size: 12.5px; }
.layers li { height: 20px; display: flex; align-items: center; white-space: nowrap; }
.layers span { padding-top: 2px; }
.layers li.selected { background: #e1e1e1; }
.pointer { width: 18px; height: 12px; flex: none; }
.selected .pointer { background: #4040ff; clip-path: polygon(6px 0, 12px 6px, 6px 12px); }
.layers .color { width: 16px; height: 16px; margin-right: 6px; flex: none; }
.layers svg { width: 16px; height: 16px; margin-right: 5px; }
.layer-scroll { width: 20px; background: #f0f0f0; display: flex; flex-direction: column; align-items: center; padding: 6px 0; border-left: 1px solid #fff; }
.layer-scroll .thumb { width: 19px; height: 423px; background: #cdcdcd; margin-top: 6px; }
.layer-scroll .down { margin-top: auto; }
.display-options { height: 28px; display: flex; align-items: center; font-size: 12.7px; padding-left: 11px; white-space: nowrap; }
.tri { border-left: 5px solid #000; border-top: 5px solid transparent; border-bottom: 5px solid transparent; margin-right: 3px; }
.presets { height: 58px; padding: 0 0 0 6px; font-size: 12.5px; border-left: 1px solid #b5b5b5; }
.presets label { display: block; height: 21px; line-height: 21px; }
.presets .combo { width: 166px; font-size: 14.1px; }
.panel .filter-head { border-top: 5px solid #dcdcdc; height: 30px; }
.filters { display: grid; grid-template-columns: 105px 105px; grid-auto-rows: 20px; padding: 5px 0 0 4px; height: 129px; border-left: 1px solid #b5b5b5; font-size: 12.6px; }
.filters div { display: flex; align-items: center; gap: 3px; white-space: nowrap; }
.filters svg { width: 16px; height: 16px; }

.stats { height: 40px; display: grid; grid-template-columns: 69px 65px 142px 68px 200px; padding-left: 5px; padding-top: 1px; }
.stats div { display: flex; flex-direction: column; line-height: 20px; }
.statusbar { height: 28px; border-top: 1px solid #d7d7d7; display: grid; grid-template-columns: 576px 97px 203px 321px 234px 77px 216px 187px; line-height: 27px; padding-top: 1px; }
.statusbar span { border-right: 1px solid #d7d7d7; padding-left: 4px; white-space: nowrap; }
.statusbar span:last-child { border: 0; display: flex; align-items: flex-end; justify-content: flex-end; padding: 0 3px 2px; }
.grip { width: 12px; height: 12px; }

.behind { height: 7px; flex: none; overflow: hidden; display: flex; background: linear-gradient(90deg, #dedede 72px, #d3dde1 72px, #dce4e7 867px, #cfcfcf 867px, #cfcfcf 959px, #555 959px, #555 961px, #c9c9c9 961px); position: relative; z-index: 2; opacity: .9; }
.doc-text { margin-left: 428px; width: 150px; font-size: 25.5px; line-height: 9px; margin-top: 1px; color: #4d5356; }
.bits { width: 940px; height: 8px; margin-left: 400px; }

.taskbar { height: 51px; flex: none; display: flex; background: linear-gradient(90deg, #1d2128 0, #20252c 560px, #34212b 650px, #352a24 740px, #302d20 830px, #253034 910px, #282326 1000px, #2a292d 1120px, #1d3037 1240px, #33242f 1340px, #3b291e 1440px, #292729 1560px, #1b2b30 1690px, #242838 1810px, #2a2225 1920px); border-top: 1px solid #3b4042; position: relative; z-index: 2; }
.start { width: 60px; display: flex; align-items: center; justify-content: center; }
.start svg { width: 20px; height: 20px; }
.search { width: 430px; height: 49px; margin-top: 1px; background: #f2f2f2; border: 1px solid #b4b4b4; display: flex; align-items: center; font-size: 18px; color: #333; }
.mag { width: 21px; height: 21px; margin-left: 14px; }
.search span { margin: -2px 0 0 14px; letter-spacing: -.2px; white-space: nowrap; }
.art { width: 99px; height: 48px; margin-left: auto; }
.apps { display: flex; margin-left: -1px; }
.app { width: 62px; height: 50px; display: flex; align-items: center; justify-content: center; }
.app svg { width: 36px; height: 36px; margin-top: -1px; }
.open { background: linear-gradient(#76b9ed, #76b9ed) 5px 100% / 51px 3px no-repeat; }
.split { background: linear-gradient(90deg, #76b9ed 41px, #4a7ba0 41px) 5px 100% / 51px 3px no-repeat; }
.current { background: linear-gradient(#76b9ed, #76b9ed) 0 100% / 61px 3px no-repeat, linear-gradient(90deg, #4b5355 57px, #353d40 57px, #4b5355 61px, transparent 61px); }
.badge-text { font: 12px "Open Sans", sans-serif; fill: #fff; }
.word-text { font: 700 13px "Open Sans", sans-serif; fill: #fff; }
.ki-text { font: 800 23px "Open Sans", sans-serif; fill: #fff; }
.tray { flex: 1; display: flex; align-items: center; color: #fff; }
.battery { width: 61px; height: 25px; margin: -2px 0 0 116px; border: 2px solid #fff; background: #159947; line-height: 20px; font-size: 16.5px; text-align: center; box-shadow: 2px 0 0 -0px #ddd; }
.plug { width: 12px; height: 20px; margin-left: 10px; }
.moon { width: 29px; height: 29px; margin-left: 62px; margin-top: -2px; }
.weather { margin-left: 11px; width: 163px; font-size: 17.5px; letter-spacing: -.2px; white-space: nowrap; }
.tray-icons { display: flex; gap: 16px; }
.tray-icons svg { width: 24px; height: 24px; fill: none; stroke: #fff; stroke-width: 1.3; }
.pen { width: 24px; height: 24px; margin-left: 20px; }
.clock { width: 80px; margin-left: 16px; margin-top: -1px; display: flex; flex-direction: column; align-items: center; font-size: 14.4px; line-height: 23px; letter-spacing: -.15px; }
.notify { width: 22px; height: 22px; margin-left: 16px; }
.peek { width: 1px; height: 50px; background: #777; margin-left: auto; margin-right: 5px; }
```
FILE: script.js
```js
const gridSizes = [
  "1.0000 in (25.4000 mm)", "0.5000 in (12.7000 mm)", "0.2500 in (6.3500 mm)", "0.2000 in (5.0800 mm)",
  "0.1000 in (2.5400 mm)", "0.0500 in (1.2700 mm)", "0.0250 in (0.6350 mm)", "0.0200 in (0.5080 mm)",
  "0.0100 in (0.2540 mm)", "0.0050 in (0.1270 mm)", "0.0020 in (0.0508 mm)", "0.0010 in (0.0254 mm)",
  "0.1969 in (5.0000 mm)", "0.0984 in (2.5000 mm)", "0.0394 in (1.0000 mm)", "0.0197 in (0.5000 mm)",
  "0.0098 in (0.2500 mm)", "0.0079 in (0.2000 mm)", "0.0039 in (0.1000 mm)", "0.0020 in (0.0500 mm)",
  "0.0010 in (0.0250 mm)", "0.0004 in (0.0100 mm)"
];
const options = gridSizes.map(s => "Grid: " + s).concat("User grid: 0.0100 in (0.2540 mm)", "---", "Edit User Grid...");
document.getElementById("grid-options").innerHTML =
  options.map((o, i) => `<li${i === 1 ? ' class="selected"' : ""}>${o}</li>`).join("");

const layers = [
  ["F.Cu", "#c83434"], ["B.Cu", "#4d7fc4"], ["F.Adhesive", "#840084"], ["B.Adhesive", "#000084"],
  ["F.Paste", "#b4a09a"], ["B.Paste", "#00c2c2"], ["F.Silkscreen", "#f2eda1"], ["B.Silkscreen", "#e8b2a7"],
  ["F.Mask", "#d864ff"], ["B.Mask", "#02ffee"], ["User.Drawings", "#c2c2c2"], ["User.Comments", "#5994dc"],
  ["User.Eco1", "#b4dbd2"], ["User.Eco2", "#d8c852"], ["Edge.Cuts", "#d0d2cd"], ["Margin", "#ff26e2"],
  ["F.Courtyard", "#ff26e2"], ["B.Courtyard", "#26e9ff"], ["F.Fab", "#afafaf"], ["B.Fab", "#585d84"],
  ["User.1", "#c2c2c2"], ["User.2", "#5994dc"], ["User.3", "#b4dbd2"], ["User.4", "#d8c852"],
  ["User.5", "#c2c2c2"], ["User.6", "#5994dc"]
];
document.getElementById("layers").innerHTML = layers.map(([name, color], i) =>
  `<li${i ? "" : ' class="selected"'}><i class="pointer"></i><i class="color" style="background:${color}"></i><svg><use href="#eye"/></svg><span>${name}</span></li>`).join("");

const filters = ["All items", "Locked items", "Footprints", "Text", "Tracks", "Vias", "Pads", "Graphics", "Zones", "Rule Areas", "Dimensions", "Other items"];
document.getElementById("filters").innerHTML = filters.map(f =>
  `<div><svg viewBox="0 0 16 16"><path d="M.5.5h15v15H.5z" fill="#fff" stroke="#222"/><path d="m3 8 3.500 3.500L13 4.500" fill="none" stroke="#222" stroke-width="1.300"/></svg>${f}</div>`).join("");

let dots = "";
for (let row = 0; row < 17; row++) {
  for (let col = 0; col < 35; col++) {
    const w = col === 14 || col === 24 ? 2 : 1;
    const h = row === 0 || row === 10 ? 2 : 1;
    dots += `<rect x="${Math.round(54.3 + col * 46.56)}" y="${Math.round(144.6 + row * 46.56)}" width="${w}" height="${h}"/>`;
  }
}
document.getElementById("grid-dots").innerHTML = dots;
```
